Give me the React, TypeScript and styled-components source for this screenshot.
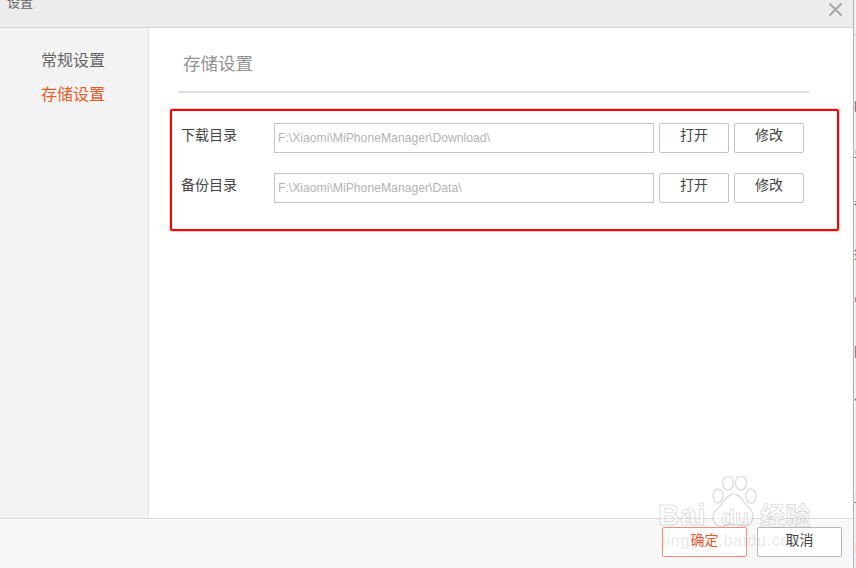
import styled, { createGlobalStyle } from 'styled-components';

const GlobalStyle = createGlobalStyle`
  html, body {
    margin: 0;
    padding: 0;
    background: #f0f0f0;
  }
  body {
    font-family: "Liberation Sans", "Noto Sans CJK SC", sans-serif;
  }
`;

const Screen = styled.div`
  display: flex;
  width: 856px;
  height: 568px;
  overflow: hidden;
  position: relative;
`;

const Dialog = styled.div`
  display: flex;
  flex-direction: column;
  flex: none;
  width: 854px;
  height: 568px;
  background: #fff;
  border-right: 1px solid #b4b4b4;
  box-sizing: border-box;
`;

const TitleBar = styled.div`
  display: flex;
  justify-content: space-between;
  flex: none;
  height: 28px;
  padding: 0 10px 0 7px;
  box-sizing: border-box;
  background: #ececec;
  border-bottom: 1px solid #d8d8d8;
  overflow: hidden;
`;

const Title = styled.div`
  margin-top: -6px;
  font-size: 13px;
  line-height: 18px;
  color: #666;
`;

const CloseButton = styled.svg`
  width: 15px;
  height: 15px;
  margin-top: 2px;
  stroke: #a8a8a8;
  stroke-width: 2;
  fill: none;
`;

const Body = styled.div`
  display: flex;
  flex: 1;
  min-height: 0;
`;

const Sidebar = styled.div`
  display: flex;
  flex-direction: column;
  gap: 10px;
  flex: none;
  width: 149px;
  padding: 21px 0 0 41px;
  box-sizing: border-box;
  background: #f3f3f3;
  border-right: 1px solid #e2e2e2;
`;

const SideItem = styled.div<{ $active?: boolean }>`
  font-size: 16px;
  line-height: 24px;
  color: ${(props) => (props.$active ? '#ec5a2a' : '#666')};
`;

const Main = styled.div`
  flex: 1;
  display: flex;
  flex-direction: column;
  padding: 0 14px 0 21px;
`;

const SectionTitle = styled.div`
  margin: 0 30px 0 9px;
  padding: 24px 0 15px 4px;
  font-size: 17.5px;
  line-height: 24px;
  color: #929292;
  border-bottom: 2px solid #dedede;
`;

const RedBox = styled.div`
  display: flex;
  flex-direction: column;
  gap: 20px;
  height: 122px;
  margin-top: 16px;
  padding: 12px 0 0 9px;
  box-sizing: border-box;
  border: 2px solid #ff0000;
  border-radius: 2px;
  box-shadow: 0 0 0 1px rgba(255, 60, 60, 0.25);
`;

const Row = styled.div`
  display: flex;
  align-items: center;
  gap: 5px;
`;

const Label = styled.div`
  width: 88px;
  margin-top: -6px;
  font-size: 14px;
  line-height: 20px;
  color: #444;
`;

const PathInput = styled.div`
  width: 380px;
  height: 30px;
  padding-left: 3px;
  box-sizing: border-box;
  border: 1px solid #c4c4c4;
  font-size: 12.2px;
  line-height: 28px;
  color: #b4b4b4;
  background: #fff;
`;

const SmallButton = styled.div`
  width: 70px;
  height: 30px;
  box-sizing: border-box;
  border: 1px solid #c4c4c4;
  border-radius: 2px;
  font-size: 14px;
  line-height: 22px;
  text-align: center;
  color: #444;
`;

const Footer = styled.div`
  display: flex;
  justify-content: flex-end;
  gap: 10px;
  flex: none;
  height: 50px;
  padding: 8px 11px 0 0;
  box-sizing: border-box;
  background: #f8f8f8;
  border-top: 1px solid #dcdcdc;
`;

const FooterButton = styled.div<{ $primary?: boolean }>`
  width: 85px;
  height: 30px;
  box-sizing: border-box;
  border: 1px solid ${(props) => (props.$primary ? '#ff8a75' : '#b8b8b8')};
  border-radius: 2px;
  background: #fff;
  font-size: 14px;
  line-height: 25px;
  text-align: center;
  color: ${(props) => (props.$primary ? '#f2542d' : '#444')};
`;

const Strip = styled.div`
  flex: 1;
  overflow: hidden;
  font-size: 13px;
  line-height: 49px;
  color: #4a5a7a;
  white-space: nowrap;
`;

const StripHead = styled.div`
  height: 34px;
  margin-bottom: 47px;
  border-bottom: 1px solid #d4d4d4;
`;

const StripLine = styled.div`
  height: 49px;
`;

const Watermark = styled.div`
  position: absolute;
  left: 658px;
  top: 476px;
  width: 160px;
  height: 85px;
  pointer-events: none;
`;

const Paw = styled.svg`
  position: absolute;
  left: 50px;
  top: 0;
  width: 50px;
  height: 54px;
  fill: rgba(255, 255, 255, 0.55);
  stroke: rgba(150, 150, 150, 0.3);
  stroke-width: 1.5;
`;

const MarkBrand = styled.div`
  position: absolute;
  left: 0;
  top: 22px;
  display: flex;
  align-items: baseline;
  font-size: 30px;
  font-weight: 700;
  line-height: 32px;
  letter-spacing: 0.5px;
  color: rgba(255, 255, 255, 0.55);
  -webkit-text-stroke: 1px rgba(140, 140, 140, 0.3);
`;

const MarkDu = styled.span`
  margin-left: 15px;
  font-size: 22px;
`;

const MarkJingyan = styled.span`
  margin-left: 11px;
  font-size: 25px;
  font-family: "Noto Sans CJK SC", sans-serif;
`;

const MarkUrl = styled.div`
  position: absolute;
  left: 4px;
  top: 54px;
  font-size: 16px;
  line-height: 22px;
  letter-spacing: 0.8px;
  color: rgba(160, 160, 160, 0.25);
`;

const rows = [
  { label: '下载目录', path: 'F:\\Xiaomi\\MiPhoneManager\\Download\\' },
  { label: '备份目录', path: 'F:\\Xiaomi\\MiPhoneManager\\Data\\' },
];

const stripChars = ['时', '导', '备', '接', '管', '网', '句', '', '二', '目'];

export default function App() {
  return (
    <Screen>
      <GlobalStyle />
      <Dialog>
        <TitleBar>
          <Title>设置</Title>
          <CloseButton viewBox="0 0 15 15">
            <path d="M1.5 1.5 L13.5 13.5 M13.5 1.5 L1.5 13.5" />
          </CloseButton>
        </TitleBar>
        <Body>
          <Sidebar>
            <SideItem>常规设置</SideItem>
            <SideItem $active>存储设置</SideItem>
          </Sidebar>
          <Main>
            <SectionTitle>存储设置</SectionTitle>
            <RedBox>
              {rows.map((row) => (
                <Row key={row.label}>
                  <Label>{row.label}</Label>
                  <PathInput>{row.path}</PathInput>
                  <SmallButton>打开</SmallButton>
                  <SmallButton>修改</SmallButton>
                </Row>
              ))}
            </RedBox>
          </Main>
        </Body>
        <Footer>
          <FooterButton $primary>确定</FooterButton>
          <FooterButton>取消</FooterButton>
        </Footer>
      </Dialog>
      <Strip>
        <StripHead />
        {stripChars.map((char, idx) => (
          <StripLine key={idx}>{char}</StripLine>
        ))}
      </Strip>
      <Watermark>
        <Paw viewBox="0 0 50 54">
          <ellipse cx="10" cy="20" rx="5" ry="7" />
          <ellipse cx="20" cy="7" rx="5.5" ry="7" />
          <ellipse cx="33" cy="7" rx="5.5" ry="7" />
          <ellipse cx="43" cy="20" rx="5" ry="7" />
          <path d="M26 18 C33 18 35 27 41 32 C48 38 45 50 36 50 C30 50 28 48 24 48 C20 48 17 50 13 50 C5 50 2 39 9 33 C16 28 18 18 26 18 Z" />
        </Paw>
        <MarkBrand>
          Bai
          <MarkDu>du</MarkDu>
          <MarkJingyan>经验</MarkJingyan>
        </MarkBrand>
        <MarkUrl>jingyan.baidu.com</MarkUrl>
      </Watermark>
    </Screen>
  );
}
